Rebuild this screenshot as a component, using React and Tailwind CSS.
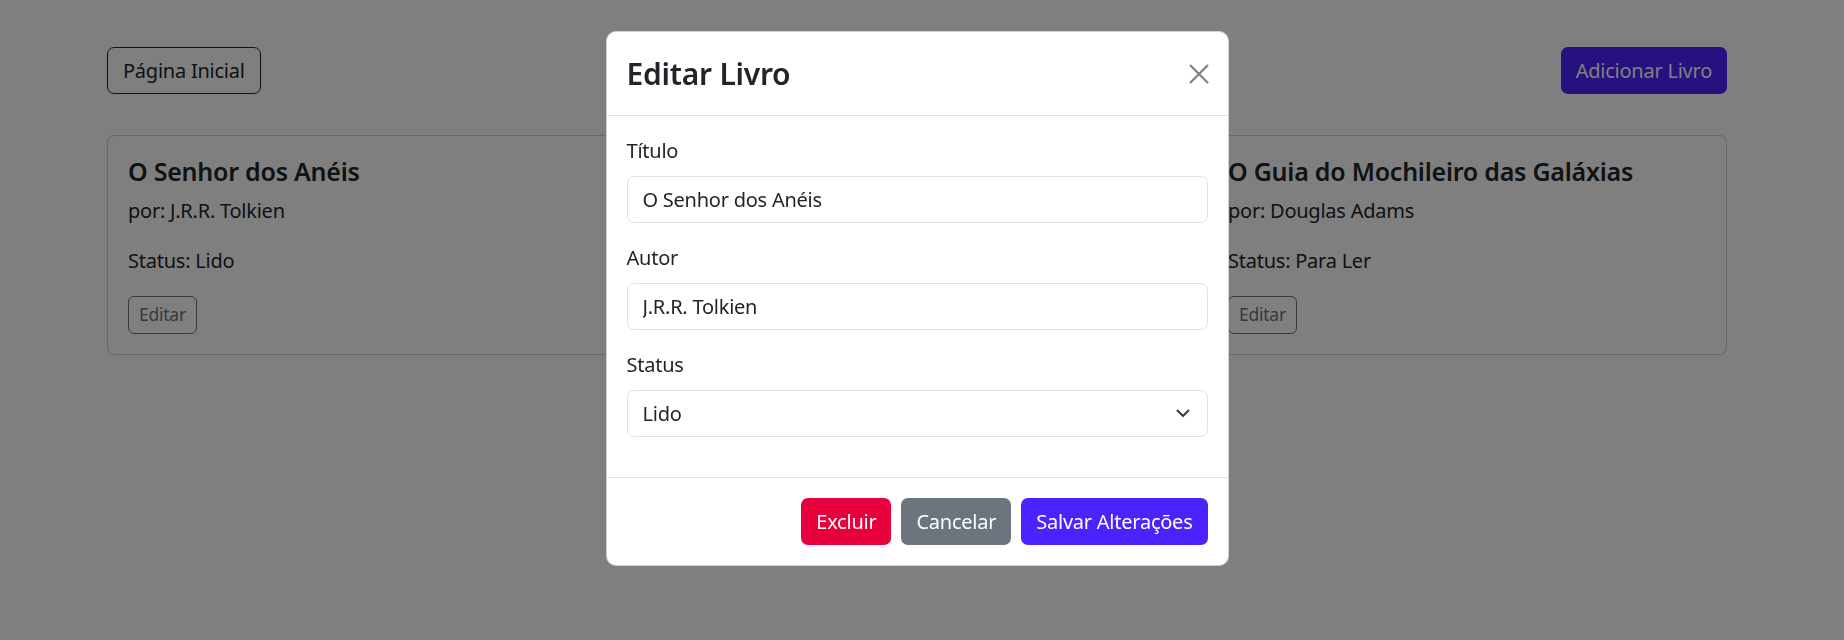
import React from "react";

const books = [
  { title: "O Senhor dos Anéis", author: "J.R.R. Tolkien", status: "Lido" },
  { title: "Dom Casmurro", author: "Machado de Assis", status: "Lendo" },
  { title: "O Guia do Mochileiro das Galáxias", author: "Douglas Adams", status: "Para Ler" },
];

const BookCard = ({ book }) => (
  <div className="rounded-[7px] border border-black/[0.175] bg-white p-5">
    <h5 className="mb-[10px] text-[25px] font-semibold leading-[30px]">{book.title}</h5>
    <p className="mb-5 text-[20px] leading-[30px]">por: {book.author}</p>
    <p className="mb-5 text-[20px] leading-[30px]">Status: {book.status}</p>
    <button className="h-[38px] rounded-[6px] border border-[#6c757d] px-[10px] text-[17.5px] leading-none text-[#6c757d]">
      Editar
    </button>
  </div>
);

const Field = ({ label, children }) => (
  <div className="mb-5">
    <label className="mb-[10px] block text-[20px] leading-[30px]">{label}</label>
    {children}
  </div>
);

export default function App() {
  return (
    <div className="relative min-h-screen bg-white font-['Noto_Sans',sans-serif] tracking-[-0.015em] text-[#212529]">
      {/* page under the modal */}
      <div className="pr-[10px]">
        <div className="mx-auto w-[1620px] pt-[47px]">
          <div className="flex items-center justify-between">
            <button className="h-[47px] rounded-[7px] border border-[#212529] px-[15px] text-[20px]">
              Página Inicial
            </button>
            <button className="h-[47px] rounded-[7px] bg-[#4c22ff] px-[15px] text-[20px] text-white">
              Adicionar Livro
            </button>
          </div>
          <div className="mt-[41px] grid grid-cols-3 gap-x-[30px]">
            {books.map((b) => (
              <BookCard key={b.title} book={b} />
            ))}
          </div>
        </div>
      </div>

      {/* backdrop */}
      <div className="fixed inset-0 bg-black/50" />

      {/* modal */}
      <div className="fixed inset-0 flex justify-center pr-[10px] pt-[31px]">
        <div className="h-fit w-[623px] rounded-[10px] border border-black/[0.175] bg-white">
          <div className="flex items-center justify-between border-b border-[#dee2e6] p-5">
            <h4 className="text-[30px] font-semibold leading-[43px]">Editar Livro</h4>
            <button className="mr-[-1px] flex h-5 w-5 items-center justify-center">
              <svg width="20" height="20" viewBox="0 0 20 20" fill="none" stroke="#808080" strokeWidth="2.2">
                <path d="M1 1 19 19M19 1 1 19" />
              </svg>
            </button>
          </div>

          <div className="px-5 pt-5 pb-5">
            <Field label="Título">
              <input
                readOnly
                defaultValue="O Senhor dos Anéis"
                className="block h-[47px] w-full rounded-[7px] border border-[#dee2e6] px-[15px] text-[20px] outline-none"
              />
            </Field>
            <Field label="Autor">
              <input
                readOnly
                defaultValue="J.R.R. Tolkien"
                className="block h-[47px] w-full rounded-[7px] border border-[#dee2e6] px-[15px] text-[20px] outline-none"
              />
            </Field>
            <Field label="Status">
              <div className="relative">
                <select
                  defaultValue="Lido"
                  className="block h-[47px] w-full appearance-none rounded-[7px] border border-[#dee2e6] bg-white px-[15px] text-[20px] outline-none"
                >
                  <option>Para Ler</option>
                  <option>Lendo</option>
                  <option>Lido</option>
                </select>
                <svg
                  className="pointer-events-none absolute right-[18px] top-[19px]"
                  width="14"
                  height="9"
                  viewBox="0 0 14 9"
                  fill="none"
                  stroke="#343a40"
                  strokeWidth="2"
                  strokeLinecap="round"
                  strokeLinejoin="round"
                >
                  <path d="M1.5 1.5 7 7 12.5 1.5" />
                </svg>
              </div>
            </Field>
          </div>

          <div className="flex justify-end gap-[10px] border-t border-[#dee2e6] p-5">
            <button className="h-[47px] rounded-[7px] bg-[#e8003d] px-[15px] text-[20px] text-white">Excluir</button>
            <button className="h-[47px] rounded-[7px] bg-[#6c757d] px-[15px] text-[20px] text-white">Cancelar</button>
            <button className="h-[47px] rounded-[7px] bg-[#4c22ff] px-[15px] text-[20px] text-white">
              Salvar Alterações
            </button>
          </div>
        </div>
      </div>
    </div>
  );
}
